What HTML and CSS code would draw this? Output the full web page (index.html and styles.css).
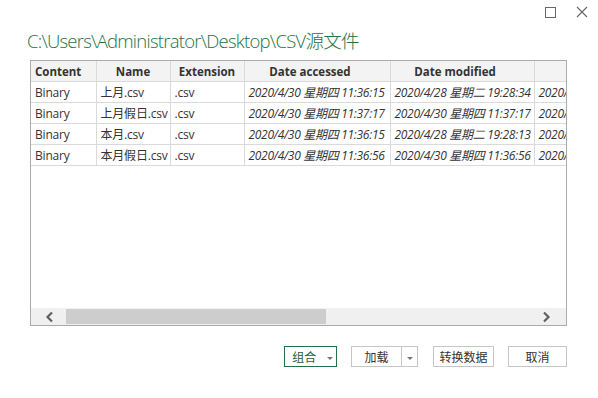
FILE: index.html
```html
<!DOCTYPE html>
<html>
<head>
	<meta charset="UTF-8">
	<title>CSV源文件</title>
	<link rel="stylesheet" href="styles.css">
</head>
<body>
	<section class="dialog">
		<div class="titlebar">
			<svg class="winbtn" width="12" height="12" viewBox="0 0 12 12"><rect x="1.5" y="1.5" width="10" height="10" fill="none" stroke="#666" stroke-width="1"/></svg>
			<svg class="winbtn" width="12" height="12" viewBox="0 0 12 12"><path d="M1 1 L11 11 M11 1 L1 11" stroke="#666" stroke-width="1.1"/></svg>
		</div>
		<h1 class="path">C:\Users\Administrator\Desktop\CSV源文件</h1>
		<div class="grid">
			<div class="grid-body">
				<table class="files">
					<colgroup>
						<col class="c-content">
						<col class="c-name">
						<col class="c-ext">
						<col class="c-acc">
						<col class="c-mod">
						<col class="c-cre">
					</colgroup>
					<thead>
						<tr>
							<th class="h-content">Content</th>
							<th>Name</th>
							<th>Extension</th>
							<th class="h-date">Date accessed</th>
							<th class="h-date">Date modified</th>
							<th></th>
						</tr>
					</thead>
					<tbody>
						<tr>
							<td>Binary</td>
							<td>上月.csv</td>
							<td>.csv</td>
							<td class="date">2020/4/30 星期四 11:36:15</td>
							<td class="date">2020/4/28 星期二 19:28:34</td>
							<td class="date">2020/</td>
						</tr>
						<tr>
							<td>Binary</td>
							<td>上月假日.csv</td>
							<td>.csv</td>
							<td class="date">2020/4/30 星期四 11:37:17</td>
							<td class="date">2020/4/30 星期四 11:37:17</td>
							<td class="date">2020/</td>
						</tr>
						<tr>
							<td>Binary</td>
							<td>本月.csv</td>
							<td>.csv</td>
							<td class="date">2020/4/30 星期四 11:36:15</td>
							<td class="date">2020/4/28 星期二 19:28:13</td>
							<td class="date">2020/</td>
						</tr>
						<tr>
							<td>Binary</td>
							<td>本月假日.csv</td>
							<td>.csv</td>
							<td class="date">2020/4/30 星期四 11:36:56</td>
							<td class="date">2020/4/30 星期四 11:36:56</td>
							<td class="date">2020/</td>
						</tr>
					</tbody>
				</table>
			</div>
			<div class="hscroll">
				<svg class="arrow" width="9" height="12" viewBox="0 0 9 12"><path d="M7 1.5 L2.5 6 L7 10.5" fill="none" stroke="#606060" stroke-width="2.2"/></svg>
				<div class="track"><div class="thumb"></div></div>
				<svg class="arrow" width="9" height="12" viewBox="0 0 9 12"><path d="M2 1.5 L6.5 6 L2 10.5" fill="none" stroke="#606060" stroke-width="2.2"/></svg>
			</div>
		</div>
		<div class="actions">
			<button class="btn btn-primary">组合 <span class="caret"></span></button>
			<div class="split">
				<button class="btn split-main">加载</button>
				<button class="btn split-drop"><span class="caret"></span></button>
			</div>
			<button class="btn btn-transform">转换数据</button>
			<button class="btn btn-cancel">取消</button>
		</div>
	</section>
</body>
</html>
```

FILE: styles.css
```css
body {
	margin: 0;
	background: #fff;
	font-family: "Open Sans", "Noto Sans CJK SC", sans-serif;
	color: #333;
}
.dialog {
	width: 598px;
	height: 398px;
	box-sizing: border-box;
}
.titlebar {
	display: flex;
	justify-content: flex-end;
	gap: 20px;
	height: 28px;
	padding: 6px 10px 0 0;
	box-sizing: border-box;
}
.winbtn {
	display: block;
}
.path {
	margin: 0 0 6px 27px;
	font-size: 18.5px;
	line-height: 26px;
	font-weight: 300;
	color: #217346;
	font-family: "Open Sans", "Noto Sans CJK SC", sans-serif;
	letter-spacing: -0.75px;
}
.grid {
	margin-left: 30px;
	width: 537px;
	height: 266px;
	border: 1px solid #ababab;
	box-sizing: border-box;
	display: flex;
	flex-direction: column;
}
.grid-body {
	flex: 1;
	overflow: hidden;
}
.files {
	border-collapse: collapse;
	table-layout: fixed;
	width: 680px;
	font-size: 12px;
	font-family: "Open Sans", "Noto Sans CJK SC", sans-serif;
}
.c-content { width: 65px; }
.c-name { width: 74px; }
.c-ext { width: 74px; }
.c-acc { width: 146px; }
.c-mod { width: 144px; }
.c-cre { width: 177px; }
.files th,
.files td {
	height: 20px;
	padding: 0 4px;
	border: 1px solid #dadada;
	white-space: nowrap;
	overflow: hidden;
	line-height: 19px;
}
.files tr > :first-child {
	border-left: none;
}
.files thead tr > * {
	border-top: none;
}
.files th {
	background: #f3f3f3;
	font-weight: 700;
	font-size: 11.5px;
	color: #333;
	text-align: center;
}
.files th.h-content {
	text-align: left;
}
.files th.h-date {
	padding-right: 18px;
}
.files td {
	color: #333;
	letter-spacing: -0.2px;
}
.files td.date {
	font-style: italic;
	font-size: 12px;
	letter-spacing: -0.3px;
}
.hscroll {
	height: 17px;
	background: #f0f0f0;
	display: flex;
	align-items: center;
}
.arrow {
	display: block;
	flex: none;
	margin: 0 12px 0 14px;
}
.hscroll .arrow:last-child {
	margin: 0 15px 0 10px;
}
.track {
	flex: 1;
	height: 15px;
}
.thumb {
	width: 260px;
	height: 15px;
	background: #cdcdcd;
}
.actions {
	display: flex;
	justify-content: flex-end;
	gap: 14px;
	padding-right: 31px;
	margin-top: 20px;
}
.btn {
	height: 21px;
	border: 1px solid #c6c6c6;
	background: #fff;
	font-family: "Noto Sans CJK SC", sans-serif;
	font-size: 12px;
	color: #333;
	padding: 0;
	line-height: 19px;
}
.btn-primary {
	width: 53px;
	border-color: #217346;
	color: #1e5e38;
	padding-left: 4px;
}
.caret {
	display: inline-block;
	width: 0;
	height: 0;
	margin-left: 8px;
	vertical-align: middle;
	border-left: 3px solid transparent;
	border-right: 3px solid transparent;
	border-top: 3px solid #777;
}
.split {
	display: flex;
	margin-right: 1px;
}
.split-main {
	width: 51px;
}
.split-drop {
	width: 16px;
	border-left: none;
}
.split-drop .caret {
	margin-left: 0;
}
.btn-transform {
	width: 61px;
}
.btn-cancel {
	width: 59px;
}
```
